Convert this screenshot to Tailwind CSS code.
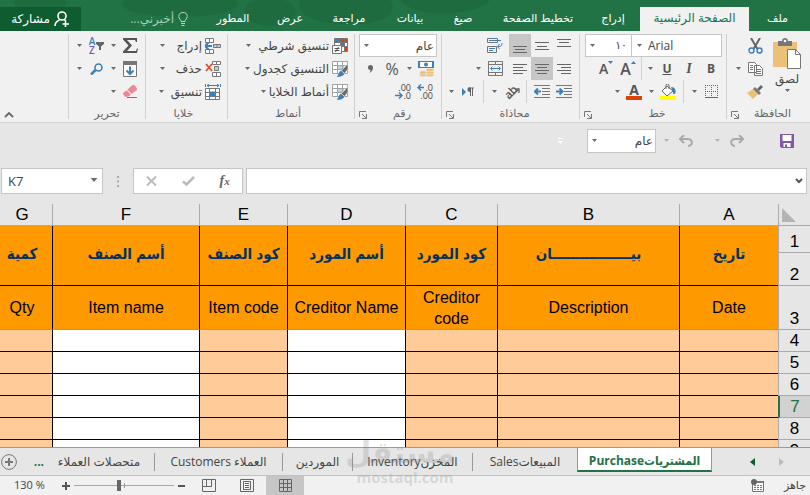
<!DOCTYPE html>
<html lang="ar" dir="rtl">
<head>
  <meta charset="UTF-8" />
  <meta name="viewport" content="width=device-width, initial-scale=1.0" />
  <title>المشتريات Purchase</title>
  <script src="https://cdn.jsdelivr.net/npm/@tailwindcss/browser@4"></script>
</head>
<body class="h-screen flex flex-col overflow-hidden bg-[#e6e6e6] font-['Open_Sans','DejaVu_Sans',sans-serif] text-[11px] text-[#444]">

  <!-- shared icons -->
  <svg class="hidden">
    <symbol id="caret" viewBox="0 0 5 3"><path d="M0 0h5L2.5 3z" fill="#6a6a6a"/></symbol>
    <symbol id="launcher" viewBox="0 0 8 8"><path d="M.5 6V.5H7M3 3l4 4M7.500 3v4.500H3" fill="none" stroke="#777"/></symbol>
    <symbol id="brushgrid" viewBox="0 0 16 16">
      <path d="M1 1h14v11H1z" fill="#fff"/><path d="M5 4h7v5H5z" fill="#b8d0e6"/>
      <path d="M.5.5h15v12H.5zM.5 4.500h15M.5 8.500h15M5.500 .5v12M10.500 .5v12" fill="none" stroke="#a2a2a2"/>
      <path d="M16 2.500l-6.500 7 3 3L16 8z" fill="#6a6a6a" stroke="#f1f1f1" stroke-width=".6"/><path d="M9 9.500l3.300 3.500c-1 2-4 3-7.800 3 2-1 2-5.500 4.500-6.500z" fill="#3f7fb8"/>
    </symbol>
  </svg>

  <!-- tabs -->
  <header class="relative flex items-end h-[31px] shrink-0 bg-[#217346] text-white">
    <svg class="absolute inset-y-0 left-0 w-[520px] h-full" viewBox="0 0 520 31" preserveAspectRatio="none" fill="#1e6b40">
      <ellipse cx="180" cy="4" rx="58" ry="13"/><ellipse cx="40" cy="3" rx="26" ry="9"/><path d="M300 0h90c10 12-6 22-28 24-30 2-70-4-62-24z"/><path d="M400 0h90c-10 14-70 22-90 0z"/><ellipse cx="270" cy="12" rx="26" ry="14"/>
    </svg>
    <nav class="relative flex h-6 text-center leading-[22px]">
      <a href="#" class="w-[61px] pr-1">ملف</a>
      <a href="#" class="w-[109px] bg-[#f1f1f1] text-xs leading-[22px] text-[#217346]">الصفحة الرئيسية</a>
      <a href="#" class="w-[54px]">إدراج</a>
      <a href="#" class="w-[96px]">تخطيط الصفحة</a>
      <a href="#" class="w-[54px]">صيغ</a>
      <a href="#" class="w-[52px]">بيانات</a>
      <a href="#" class="w-[70px]">مراجعة</a>
      <a href="#" class="w-[48px]">عرض</a>
      <a href="#" class="w-[66px]">المطور</a>
    </nav>
    <button class="relative flex items-center gap-1 h-6 pr-3 text-xs text-[#a5cfb5]">
      <svg class="w-[10px] h-[14px]" viewBox="0 0 10 14" fill="none" stroke="#b5d8c2"><path d="M3 9.500C3 7.500.8 7 .8 4.500a4.200 4 0 0 1 8.400 0C9.200 7 7 7.500 7 9.500zM3 11.500h4M3.500 13.500h3"/></svg>
      أخبرني...
    </button>
    <button class="relative mr-auto flex items-center justify-center gap-1 w-[81px] h-6 bg-[#0e5c2f] text-xs">
      <svg class="w-4 h-4" viewBox="0 0 16 16" fill="none" stroke="#fff" stroke-width="1.600"><circle cx="8" cy="5" r="4"/><path d="M1 15c0-3 2-5 4.500-6M10.500 9l1.500 1M11.500 10v6M8.500 13h6.500"/></svg>
      مشاركة
    </button>
  </header>

  <!-- ribbon -->
  <div class="flex h-[92px] shrink-0 pt-[3px] bg-[#f1f1f1] border-b border-[#d2d2d2]">

    <section class="flex flex-col w-[84px] h-[85px] border-l border-[#d0d0d0]">
      <div class="flex h-[69px] pr-1">
        <button class="flex flex-col items-center w-[38px] pt-1" aria-label="لصق">
          <svg class="w-[30px] h-[31px] shrink-0" viewBox="0 0 30 31"><path d="M1 4h24v25H1z" fill="#ebc078"/><path d="M6 3h4c0-4 6-4 6 0h4v5H6z" fill="#777"/><circle cx="13" cy="3" r="1.300" fill="#fff"/><path d="M15.500 11.500h8l5 5v14h-13z" fill="#fff" stroke="#777"/><path d="M23.500 11.500v5h5" fill="none" stroke="#777"/></svg>
          <span class="text-xs leading-5">لصق</span>
          <svg class="w-[5px] h-[3px]"><use href="#caret"/></svg>
        </button>
        <div class="flex flex-col pr-0.5">
          <button class="flex items-center justify-center w-[22px] h-[23px]" aria-label="قص"><svg class="w-[15px] h-4" viewBox="0 0 15 16" fill="none"><path d="M3 0l6.500 11M12 0L5.500 11" stroke="#666" stroke-width="2"/><circle cx="3.500" cy="12.500" r="2.500" stroke="#3f7fb8" stroke-width="1.400"/><circle cx="11.500" cy="12.500" r="2.500" stroke="#3f7fb8" stroke-width="1.400"/></svg></button>
          <div class="flex">
            <button class="flex items-center justify-center w-[22px] h-[23px]" aria-label="نسخ"><svg class="w-[15px] h-[14px]" viewBox="0 0 15 14"><path d="M.5.5h6l2 2v8h-8zM6.500 3.500h5l3 3v7h-8z" fill="#fff" stroke="#777"/><path d="M2 3.500h3M2 5.500h3M2 7.500h3M8 7.500h5M8 9.500h5M8 11.500h5" stroke="#3f7fb8"/></svg></button>
            <button class="flex items-center justify-center w-3 h-[23px]" aria-label="خيارات النسخ"><svg class="w-[5px] h-[3px]"><use href="#caret"/></svg></button>
          </div>
          <button class="flex items-center justify-center w-[22px] h-[23px]" aria-label="نسخ التنسيق"><svg class="w-4 h-[14px]" viewBox="0 0 16 14"><path d="M0 8l6-4 5 5-5 5z" fill="#ebc078"/><path d="M6 4l2-2 6 6-2 2z" fill="#777"/><path d="M10 4l4-4 2 2-4 4z" fill="#666"/></svg></button>
        </div>
      </div>
      <div class="flex items-end h-4 px-1 text-[#666]"><span class="flex-1 text-center leading-3">الحافظة</span><button aria-label="خيارات الحافظة"><svg class="w-2 h-2"><use href="#launcher"/></svg></button></div>
    </section>

    <section class="flex flex-col w-[147px] h-[85px] border-l border-[#d0d0d0]">
      <div class="flex pr-1">
        <label class="relative"><select dir="ltr" aria-label="الخط" class="appearance-none block w-[91px] h-[23px] pl-4 bg-white border border-[#c6c6c6] text-xs"><option>Arial</option></select><svg class="absolute left-[6px] top-[10px] w-[5px] h-[3px]"><use href="#caret"/></svg></label>
        <label class="relative -mr-px"><select aria-label="حجم الخط" class="appearance-none block w-[47px] h-[23px] pr-1 bg-white border border-[#c6c6c6]"><option>١٠</option></select><svg class="absolute left-[5px] top-[10px] w-[5px] h-[3px]"><use href="#caret"/></svg></label>
      </div>
      <div class="flex items-center h-[23px] pr-1 text-[#555]">
        <button class="w-[22px] text-xs font-bold">B</button>
        <button class="w-[22px] text-sm font-bold font-['Liberation_Serif',serif] italic">I</button>
        <button class="w-[22px] text-xs font-bold underline">U</button>
        <button class="flex justify-center w-3" aria-label="نوع التسطير"><svg class="w-[5px] h-[3px]"><use href="#caret"/></svg></button>
        <span class="w-px h-[23px] mx-0.5 bg-[#d0d0d0]"></span>
        <button class="flex justify-center items-center w-[22px] h-[23px] text-base font-semibold" aria-label="تكبير الخط"><svg class="w-[5px] h-[3px] mb-3" viewBox="0 0 5 3"><path d="M0 3h5L2.500 0z" fill="#3f7fb8"/></svg>A</button>
        <button class="flex justify-center items-center w-[22px] h-[23px] text-sm font-semibold" aria-label="تصغير الخط"><svg class="w-[5px] h-[3px] mb-3" viewBox="0 0 5 3"><path d="M0 0h5L2.500 3z" fill="#3f7fb8"/></svg>A</button>
      </div>
      <div class="flex items-center h-[23px] pr-1">
        <button class="flex justify-center w-[22px]" aria-label="حدود"><svg class="w-[13px] h-[13px]" viewBox="0 0 13 13" fill="none" stroke="#666"><path d="M.5 0v12M6.500 0v12M12.500 0v12M0 .5h13M0 6.500h13" stroke-dasharray="1 1"/><path d="M0 12.500h13"/></svg></button>
        <button class="flex justify-center w-3" aria-label="خيارات الحدود"><svg class="w-[5px] h-[3px]"><use href="#caret"/></svg></button>
        <span class="w-px h-[23px] mx-1 bg-[#d0d0d0]"></span>
        <button class="flex justify-center w-[22px]" aria-label="لون التعبئة"><svg class="w-4 h-4" viewBox="0 0 16 16"><path d="M0 12h16v4H0z" fill="#ffff00"/><path d="M7 2l6 5-6 5-5-5z" fill="#fff" stroke="#666"/><path d="M6 5V1.500a1.500 1.500 0 0 1 3 0V5" fill="none" stroke="#666"/><path d="M11 3c4 0 5 3 4.500 6-1 2-3 1-2.500-1z" fill="#3f7fb8"/></svg></button>
        <button class="flex justify-center w-3" aria-label="ألوان التعبئة"><svg class="w-[5px] h-[3px]"><use href="#caret"/></svg></button>
        <button class="flex flex-col items-center w-[22px] text-sm leading-3 font-bold text-[#555]" aria-label="لون الخط">A<span class="w-4 h-1 bg-[#e04006]"></span></button>
        <button class="flex justify-center w-3" aria-label="ألوان الخط"><svg class="w-[5px] h-[3px]"><use href="#caret"/></svg></button>
      </div>
      <div class="flex items-end h-4 px-1 text-[#666]"><span class="flex-1 text-center leading-3">خط</span><button aria-label="خيارات الخط"><svg class="w-2 h-2"><use href="#launcher"/></svg></button></div>
    </section>

    <section class="flex flex-col w-[138px] h-[85px] border-l border-[#d0d0d0]">
      <div class="flex items-center h-[23px] pr-1">
        <button class="flex justify-center items-center w-[22px] h-[23px]" aria-label="محاذاة للأعلى"><svg class="w-[14px] h-[14px]" viewBox="0 0 14 14" stroke="#666"><path d="M0 .5h14M2 3.500h10M0 7.500h14"/></svg></button>
        <button class="flex justify-center items-center w-[22px] h-[23px]" aria-label="محاذاة للوسط"><svg class="w-[14px] h-[14px]" viewBox="0 0 14 14" stroke="#666"><path d="M0 3.500h14M2 7.500h10M0 10.500h14"/></svg></button>
        <button class="flex justify-center items-center w-[22px] h-[23px] bg-[#c6c6c6]" aria-label="محاذاة للأسفل"><svg class="w-[14px] h-[14px]" viewBox="0 0 14 14" stroke="#666"><path d="M0 7.500h14M2 10.500h10M0 13.500h14"/></svg></button>
        <button class="flex justify-center items-center w-[22px] h-[23px] mr-[3px]" aria-label="التفاف النص"><svg class="w-4 h-4" viewBox="0 0 16 16" fill="none"><path d="M.5.5h10v4H.5zM.5 8.500h9v6H.5z" stroke="#777"/><path d="M2 2.500h12M2 10.500h6M2 12.500h4M11 8.500h1.500c2 0 2.500-2 2.500-3.500M12.500 6l-2 2.500 2 2.500" stroke="#3f7fb8"/></svg></button>
      </div>
      <div class="flex items-center h-[23px] pr-1">
        <button class="flex justify-center items-center w-[22px] h-[23px]" aria-label="محاذاة لليمين"><svg class="w-[14px] h-[14px]" viewBox="0 0 14 14" stroke="#666"><path d="M0 2.500h14M4 5.500h10M0 8.500h14M4 11.500h10"/></svg></button>
        <button class="flex justify-center items-center w-[22px] h-[23px] bg-[#c6c6c6]" aria-label="توسيط"><svg class="w-[14px] h-[14px]" viewBox="0 0 14 14" stroke="#666"><path d="M0 2.500h14M2 5.500h10M0 8.500h14M2 11.500h10"/></svg></button>
        <button class="flex justify-center items-center w-[22px] h-[23px]" aria-label="محاذاة لليسار"><svg class="w-[14px] h-[14px]" viewBox="0 0 14 14" stroke="#666"><path d="M0 2.500h14M0 5.500h10M0 8.500h14M0 11.500h10"/></svg></button>
        <button class="flex justify-center items-center w-[22px] h-[23px] mr-[3px]" aria-label="دمج وتوسيط"><svg class="w-[15px] h-[15px]" viewBox="0 0 15 15" fill="none"><path d="M.5.5h14v14H.5zM.5 3.500h14M.5 11.500h14M7.500 .5v3M7.500 11.500v3" stroke="#777"/><path d="M2.500 7.500h10M4.500 5.500l-2 2 2 2M10.500 5.500l2 2-2 2" stroke="#3f7fb8"/></svg></button>
        <button class="flex justify-center w-3" aria-label="خيارات الدمج"><svg class="w-[5px] h-[3px]"><use href="#caret"/></svg></button>
      </div>
      <div class="flex items-center h-[23px] pr-1">
        <button class="flex justify-center w-[22px]" aria-label="إنقاص المسافة البادئة"><svg class="w-4 h-[13px]" viewBox="0 0 16 13"><path d="M0 .5h16M8 3.500h8M8 6.500h8M8 9.500h8M0 12.500h16" stroke="#777"/><path d="M0 6.500h6M3.500 3.500l3 3-3 3" fill="none" stroke="#3f7fb8" stroke-width="2"/></svg></button>
        <button class="flex justify-center w-[22px]" aria-label="زيادة المسافة البادئة"><svg class="w-4 h-[13px]" viewBox="0 0 16 13"><path d="M0 .5h16M8 3.500h8M8 6.500h8M8 9.500h8M0 12.500h16" stroke="#777"/><path d="M1 6.500h6M4 3.500l-3 3 3 3" fill="none" stroke="#3f7fb8" stroke-width="2"/></svg></button>
        <span class="w-px h-[23px] mx-1 bg-[#d0d0d0]"></span>
        <button class="relative flex justify-center w-[22px]" aria-label="الاتجاه"><span class="-rotate-45 text-[11px] leading-3 font-semibold text-[#555]">ab</span><svg class="absolute left-1 top-0 w-4 h-[14px]" viewBox="0 0 16 14" fill="none" stroke="#666" stroke-width="1.300"><path d="M5 13L15 3M11 3h4v4"/></svg></button>
        <button class="flex justify-center w-3" aria-label="خيارات الاتجاه"><svg class="w-[5px] h-[3px]"><use href="#caret"/></svg></button>
        <span class="w-px h-[23px] mx-1 bg-[#d0d0d0]"></span>
        <button class="flex justify-center w-[22px]" aria-label="من اليمين إلى اليسار"><svg class="w-3 h-[10px]" viewBox="0 0 12 10"><path d="M0 1l4 4-4 4z" fill="#3f7fb8"/><path d="M8.500 1v8M10.500 1v8M12 1H8" stroke="#666" fill="none"/><path d="M8 0a2.500 2.500 0 0 0 0 5z" fill="#666"/></svg></button>
        <button class="flex justify-center w-3" aria-label="خيارات اتجاه النص"><svg class="w-[5px] h-[3px]"><use href="#caret"/></svg></button>
      </div>
      <div class="flex items-end h-4 px-1 text-[#666]"><span class="flex-1 text-center leading-3">محاذاة</span><button aria-label="خيارات المحاذاة"><svg class="w-2 h-2"><use href="#launcher"/></svg></button></div>
    </section>

    <section class="flex flex-col w-[87px] h-[85px] border-l border-[#d0d0d0]">
      <label class="relative mx-1"><select aria-label="تنسيق الأرقام" class="appearance-none block w-full h-[23px] pr-0.5 bg-white border border-[#c6c6c6] text-xs"><option>عام</option></select><svg class="absolute left-[5px] top-[10px] w-[5px] h-[3px]"><use href="#caret"/></svg></label>
      <div class="flex items-center h-[23px] pr-1">
        <button class="flex justify-center w-[22px]" aria-label="تنسيق محاسبي"><svg class="w-4 h-4" viewBox="0 0 16 16"><path d="M0 0h16v7H0z" fill="#3f7fb8"/><path d="M2 1h12v5H2z" fill="#fff"/><circle cx="8" cy="3.500" r="2" fill="#3f7fb8"/><g fill="#ebc078" stroke="#f1f1f1" stroke-width=".5"><ellipse cx="12" cy="14" rx="4" ry="1.800"/><ellipse cx="12" cy="11.500" rx="4" ry="1.800"/><ellipse cx="12" cy="9" rx="4" ry="1.800"/><ellipse cx="5" cy="14" rx="3.500" ry="1.800"/><ellipse cx="5" cy="11.500" rx="3.500" ry="1.800"/></g></svg></button>
        <button class="flex justify-center w-3" aria-label="خيارات العملة"><svg class="w-[5px] h-[3px]"><use href="#caret"/></svg></button>
        <button class="w-[22px] text-base leading-5 text-[#555]">%</button>
        <button class="flex justify-center w-[22px]" aria-label="نمط الفاصلة"><svg class="w-[5px] h-[8px]" viewBox="0 0 5 8"><path d="M0 2.500a2.500 2.500 0 0 1 5 0C5 5 4 7 1 8c1-1.200 1.500-2 1.500-3A2.500 2.500 0 0 1 0 2.500z" fill="#666"/></svg></button>
      </div>
      <div dir="ltr" class="flex justify-end items-center h-[23px] pr-1 text-[9px] leading-[8px]">
        <button class="w-[22px] text-right pr-1">.00<span class="flex items-center justify-end"><svg class="w-2 h-[7px]" viewBox="0 0 8 7" fill="none" stroke="#3f7fb8" stroke-width="1.500"><path d="M0 3.500h7M4 .5l3 3-3 3"/></svg>.0</span></button>
        <button class="w-[22px] text-right pr-1"><span class="flex items-center justify-end"><svg class="w-2 h-[7px]" viewBox="0 0 8 7" fill="none" stroke="#3f7fb8" stroke-width="1.500"><path d="M1 3.500h6M4 .5l-3 3 3 3"/></svg>.0</span>.00</button>
      </div>
      <div class="flex items-end h-4 px-1 text-[#666]"><span class="flex-1 text-center leading-3">رقم</span><button aria-label="خيارات الرقم"><svg class="w-2 h-2"><use href="#launcher"/></svg></button></div>
    </section>

    <section class="flex flex-col w-[127px] h-[85px] pr-1.5 border-l border-[#d0d0d0]">
      <button class="flex items-center gap-[3px] h-[23px] text-xs"><svg class="w-4 h-4" viewBox="0 0 16 16"><path d="M2 1h13v12H2z" fill="#fff"/><path d="M2 1h6v3H2zM8 5h5v3H8z" fill="#3f7fb8"/><path d="M9 1h6v3H9zM12 9h3v4h-3z" fill="#e04006"/><path d="M2.500.5h13v13H8M2.500.5V7M8.500.5V7M12.500 .5v13M2.500 4.500h13M8 8.500h7.500" fill="none" stroke="#777"/><path d="M.5 7.500h9v8h-9z" fill="#fff" stroke="#777"/><path d="M2.500 10.500h5M2.500 12.500h5M6.500 9l-3 5" stroke="#555"/></svg>تنسيق شرطي<svg class="w-[5px] h-[3px] mr-1"><use href="#caret"/></svg></button>
      <button class="flex items-center gap-[3px] h-[23px] text-xs"><svg class="w-4 h-4"><use href="#brushgrid"/></svg>التنسيق كجدول<svg class="w-[5px] h-[3px]"><use href="#caret"/></svg></button>
      <button class="flex items-center gap-[3px] h-[23px] text-xs"><svg class="w-4 h-4"><use href="#brushgrid"/></svg>أنماط الخلايا<svg class="w-[5px] h-[3px]"><use href="#caret"/></svg></button>
      <div class="flex items-end justify-center h-4 text-[#666] leading-3">أنماط</div>
    </section>

    <section class="flex flex-col w-[82px] h-[85px] pr-1.5 border-l border-[#d0d0d0]">
      <button class="flex items-center gap-[3px] h-[23px] text-xs"><svg class="w-4 h-4" viewBox="0 0 16 16" fill="#fff" stroke="#777"><path d="M.5.5h4v4h-4zM4.500.5h4v4h-4zM.5 11.500h4v4h-4zM4.500 11.500h4v4h-4z"/><path d="M8.500 6.500h7v3h-7zM12 6.500v3" fill="#b8d0e6"/><path d="M0 8h7M3.500 4.500L0 8l3.500 3.500" fill="none" stroke="#3f7fb8" stroke-width="2"/></svg>إدراج<svg class="w-[5px] h-[3px] mr-2"><use href="#caret"/></svg></button>
      <button class="flex items-center gap-[3px] h-[23px] text-xs"><svg class="w-4 h-4" viewBox="0 0 16 16" fill="#fff" stroke="#777"><path d="M7.500.5h4v3h-4zM11.500.5h4v3h-4zM7.500 11.500h4v4h-4zM11.500 11.500h4v4h-4z"/><path d="M9.500 5.500h4v4h-4z" fill="#b8d0e6"/><path d="M1 3l6 7M7 3l-6 7" stroke="#d8532a" stroke-width="1.800"/></svg>حذف<svg class="w-[5px] h-[3px] mr-2"><use href="#caret"/></svg></button>
      <button class="flex items-center gap-[3px] h-[23px] text-xs"><svg class="w-4 h-4" viewBox="0 0 16 16" fill="none"><path d="M2 1.500h12M4 0L2 1.500 4 3M12 0l2 1.500L12 3M.5 0v3M15.500 0v3" stroke="#3f7fb8"/><path d="M.5 4.500h14v11H.5z" fill="#fff" stroke="#777"/><path d="M.5 8.500h14M.5 12.500h14M4.500 4.500v11M10.500 4.500v11" stroke="#777"/><path d="M5 7.500h5v5H5z" fill="#3f7fb8"/></svg>تنسيق<svg class="w-[5px] h-[3px] mr-1"><use href="#caret"/></svg></button>
      <div class="flex items-end justify-center h-4 text-[#666] leading-3">خلايا</div>
    </section>

    <section class="flex flex-col w-[77px] h-[85px] border-l border-[#d0d0d0]">
      <div class="flex items-center h-[23px] pr-1">
        <button class="flex justify-center w-[22px]" aria-label="جمع تلقائي"><svg class="w-[15px] h-[15px]" viewBox="0 0 15 15"><path d="M0 0h14v4h-1L12 2H4l5 5.500L4 13h9l1-2.500h1L14 15H0v-1.500l5.500-6L0 1.500z" fill="#555"/></svg></button>
        <button class="flex justify-center w-3" aria-label="خيارات الجمع"><svg class="w-[5px] h-[3px]"><use href="#caret"/></svg></button>
        <button class="flex items-center justify-center w-[22px]" aria-label="فرز وتصفية"><svg class="w-2 h-2" viewBox="0 0 8 8"><path d="M0 0h8v2L5 4.500V8H3V4.500L0 2z" fill="#666"/></svg><span class="flex flex-col w-2 text-[10px] leading-[9px] font-semibold"><span class="text-[#3f7fb8]">A</span><span class="text-[#8250a8]">Z</span></span></button>
        <button class="flex justify-center w-3" aria-label="خيارات الفرز"><svg class="w-[5px] h-[3px]"><use href="#caret"/></svg></button>
      </div>
      <div class="flex items-center h-[23px] pr-1">
        <button class="flex justify-center w-[22px]" aria-label="تعبئة"><svg class="w-[14px] h-4" viewBox="0 0 14 16"><path d="M.5.5h13v15H.5z" fill="#fff" stroke="#777"/><path d="M0 0h14v4H0z" fill="#777"/><path d="M7 5.500V13M3.500 9.500L7 13l3.500-3.500" fill="none" stroke="#3f7fb8" stroke-width="2"/></svg></button>
        <button class="flex justify-center w-3" aria-label="خيارات التعبئة"><svg class="w-[5px] h-[3px]"><use href="#caret"/></svg></button>
        <button class="flex justify-center w-[22px]" aria-label="بحث وتحديد"><svg class="w-[13px] h-[12px]" viewBox="0 0 13 12" fill="none" stroke="#3f7fb8"><circle cx="8.500" cy="4.500" r="3.500" stroke-width="1.600"/><path d="M5.500 7L1 11.500" stroke-width="2.500"/></svg></button>
        <button class="flex justify-center w-3" aria-label="خيارات البحث"><svg class="w-[5px] h-[3px]"><use href="#caret"/></svg></button>
      </div>
      <div class="flex items-center h-[23px] pr-1">
        <button class="flex justify-center w-[22px]" aria-label="مسح"><svg class="w-[14px] h-[13px]" viewBox="0 0 14 13"><path d="M4.500 4.500L9.500 0h2l2.500 3.500v1.500L8.500 9z" fill="#e88a96"/><path d="M3.800 5.200l4 4.500-2.500 2H2L0 9V8z" fill="#e88a96"/><path d="M4 12.500h10" stroke="#777"/></svg></button>
        <button class="flex justify-center w-3" aria-label="خيارات المسح"><svg class="w-[5px] h-[3px]"><use href="#caret"/></svg></button>
      </div>
      <div class="flex items-end justify-center h-4 text-[#666] leading-3">تحرير</div>
    </section>

    <button class="mr-auto self-end mb-1 ml-1" aria-label="طي الشريط"><svg class="w-[10px] h-[7px]" viewBox="0 0 10 7" fill="none" stroke="#666" stroke-width="1.800"><path d="M1 6l4-4 4 4"/></svg></button>
  </div>

  <!-- quick access -->
  <div class="flex items-center h-[35px] shrink-0 pr-4">
    <button aria-label="حفظ"><svg class="w-[14px] h-[14px]" viewBox="0 0 14 14"><path d="M0 0h14v14H1.500L0 12.500z" fill="#8058a8"/><path d="M2.500 1h9v6h-9zM3.500 9h7v4h-7z" fill="#fff"/><path d="M5 10.500h2V13H5z" fill="#8058a8"/></svg></button>
    <button class="mr-9" aria-label="إعادة"><svg class="w-[14px] h-[12px]" viewBox="0 0 14 12" fill="none" stroke="#a9a9a9" stroke-width="2"><path d="M13 4H6C-.5 4 0 10.500 5 11M9 0l4 4-4 4"/></svg></button>
    <svg class="w-[5px] h-[3px] mr-2.5 opacity-40"><use href="#caret"/></svg>
    <button class="mr-[22px]" aria-label="تراجع"><svg class="w-[14px] h-[12px]" viewBox="0 0 14 12" fill="none" stroke="#a9a9a9" stroke-width="2"><path d="M1 4h7c6.500 0 6 6.500 1 7M5 0L1 4l4 4"/></svg></button>
    <svg class="w-[5px] h-[3px] mr-2.5 opacity-40"><use href="#caret"/></svg>
    <label class="relative mr-2"><select aria-label="تنسيق سريع" class="appearance-none block w-[69px] h-6 pr-0.5 bg-white border border-[#c6c6c6] text-xs"><option>عام</option></select><svg class="absolute left-[5px] top-[10px] w-[5px] h-[3px]"><use href="#caret"/></svg></label>
    <svg class="w-[5px] h-[6px] mr-6" viewBox="0 0 5 6"><path d="M0 0h5v1H0zM0 3h5L2.500 6z" fill="#fff"/></svg>
  </div>

  <!-- formula bar -->
  <div dir="ltr" class="flex items-center h-[46px] shrink-0 pl-px pr-[3px]">
    <label class="relative"><input aria-label="Name box" value="K7" class="block w-[102px] h-[26px] pl-1.5 bg-white border border-[#c6c6c6] text-[13px]"><svg class="absolute right-[5px] top-[10px] w-2 h-1"><use href="#caret"/></svg></label>
    <svg class="w-[30px] h-[11px]" viewBox="0 0 30 11" fill="#a9a9a9"><path d="M14 0h2v2h-2zM14 4.500h2v2h-2zM14 9h2v2h-2z"/></svg>
    <div class="flex items-center justify-around w-[110px] h-[26px] bg-white border border-[#c6c6c6]">
      <button aria-label="Cancel"><svg class="w-[11px] h-[10px]" viewBox="0 0 11 10" stroke="#bbb" stroke-width="2"><path d="M1 .5l9 9M10 .5l-9 9"/></svg></button>
      <button aria-label="Enter"><svg class="w-[13px] h-[10px]" viewBox="0 0 13 10" fill="none" stroke="#bbb" stroke-width="2.500"><path d="M1 5.500l3.500 3L12 1"/></svg></button>
      <button class="font-['Liberation_Serif',serif] italic font-bold text-sm leading-4 text-[#666]" aria-label="Insert function">f<span class="text-[11px]">x</span></button>
    </div>
    <label class="relative flex-1 ml-[3px]"><input aria-label="Formula" class="block w-full h-[26px] px-2 bg-white border border-[#c6c6c6] text-[13px]"><svg class="absolute right-1 top-[10px] w-2 h-[6px]" viewBox="0 0 8 6" fill="none" stroke="#555" stroke-width="2"><path d="M1 1l3 3 3-3"/></svg></label>
  </div>

  <!-- sheet -->
  <main class="flex-1 min-h-0 overflow-hidden">
    <table class="w-full table-fixed border-separate border-spacing-0 font-['Liberation_Sans','DejaVu_Sans_Condensed','DejaVu_Sans',sans-serif] text-base leading-[21px] text-black text-center">
      <colgroup><col class="w-[32px]"><col class="w-[99px]"><col class="w-[182px]"><col class="w-[92px]"><col class="w-[118px]"><col class="w-[88px]"><col class="w-[147px]"><col></colgroup>
      <thead>
        <tr class="h-[22px] text-[17px] leading-[21px] *:font-normal *:p-0 *:border-l *:border-b *:border-[#ababab] *:last:border-l-0">
          <th><svg class="w-[14px] h-[14px] mr-auto ml-[3px]" viewBox="0 0 14 14"><path d="M0 0l14 14H0z" fill="#b4b4b4"/></svg></th>
          <th>A</th><th>B</th><th>C</th><th>D</th><th>E</th><th>F</th><th class="pr-2!">G</th>
        </tr>
      </thead>
      <tbody class="[&_th]:p-0 [&_th]:align-bottom [&_th]:font-normal [&_th]:text-[17px] [&_th]:leading-[20px] [&_th]:border-l [&_th]:border-b [&_th]:border-[#ababab] [&_td]:p-0 [&_td]:border-l [&_td]:border-b [&_td]:border-black [&_td]:last:border-l-0">
        <tr class="h-[27px] text-[15px] font-bold text-[#003366] [&>td]:bg-[#ff9900] [&>td]:pb-1">
          <th class="text-black">1</th>
          <td rowspan="2">تاريخ</td><td rowspan="2">بيـــــــــــــــــان</td><td rowspan="2">كود المورد</td><td rowspan="2">أسم المورد</td><td rowspan="2">كود الصنف</td><td rowspan="2">أسم الصنف</td><td rowspan="2" class="pr-2!">كمية</td>
        </tr>
        <tr class="h-[33px]"><th>2</th></tr>
        <tr class="h-[44px] [&>td]:bg-[#ff9900] [&>td]:border-b-[#999]!">
          <th>3</th><td>Date</td><td>Description</td><td class="px-2!">Creditor code</td><td>Creditor Name</td><td>Item code</td><td>Item name</td><td class="pr-2!">Qty</td>
        </tr>
        <tr class="h-[22px] *:bg-[#ffcc99] [&>th]:bg-transparent"><th>4</th><td></td><td></td><td></td><td class="bg-white!"></td><td></td><td class="bg-white!"></td><td></td></tr>
        <tr class="h-[22px] *:bg-[#ffcc99] [&>th]:bg-transparent"><th>5</th><td></td><td></td><td></td><td class="bg-white!"></td><td></td><td class="bg-white!"></td><td></td></tr>
        <tr class="h-[22px] *:bg-[#ffcc99] [&>th]:bg-transparent"><th>6</th><td></td><td></td><td></td><td class="bg-white!"></td><td></td><td class="bg-white!"></td><td></td></tr>
        <tr class="h-[22px] *:bg-[#ffcc99]"><th class="bg-[#d2d2d2]! text-[#217346] border-l-2! border-l-[#217346]!">7</th><td></td><td></td><td></td><td class="bg-white!"></td><td></td><td class="bg-white!"></td><td></td></tr>
        <tr class="h-[22px] *:bg-[#ffcc99] [&>th]:bg-transparent"><th>8</th><td></td><td></td><td></td><td class="bg-white!"></td><td></td><td class="bg-white!"></td><td></td></tr>
        <tr class="h-[22px] *:bg-[#ffcc99] [&>th]:bg-transparent"><th>9</th><td></td><td></td><td></td><td class="bg-white!"></td><td></td><td class="bg-white!"></td><td></td></tr>
      </tbody>
    </table>
  </main>

  <!-- sheet tabs -->
  <footer class="relative shrink-0">
    <div class="flex items-center h-[29px] border-t border-b border-t-[#999] border-b-[#c0c0c0] text-xs">
      <div class="flex items-center justify-center gap-6 w-[98px] shrink-0 pl-3">
        <button aria-label="السابق"><svg class="w-[5px] h-2" viewBox="0 0 5 8"><path d="M0 0l5 4-5 4z" fill="#bbb"/></svg></button>
        <button aria-label="التالي"><svg class="w-[5px] h-2" viewBox="0 0 5 8"><path d="M5 0L0 4l5 4z" fill="#0e5c2f"/></svg></button>
      </div>
      <nav class="flex items-center h-full text-center whitespace-nowrap leading-[18px]">
        <a href="#" class="self-start w-[135px] h-6 pt-1 bg-white border-x border-[#999] border-b-2 border-b-[#217346] font-['Open_Sans','DejaVu_Sans_Condensed','DejaVu_Sans',sans-serif] leading-[18px] font-bold text-[#217346]">المشترياتPurchase</a>
        <a href="#" class="w-[105px] border-l border-[#999]">المبيعاتSales</a>
        <a href="#" class="w-[120px] border-l border-[#999]">المخزنInventory</a>
        <a href="#" class="w-[70px] border-l border-[#999]">الموردين</a>
        <a href="#" class="w-[128px] border-l border-[#999]">العملاء Customers</a>
        <a href="#" class="w-[110px]">متحصلات العملاء</a>
      </nav>
      <button class="font-bold text-[#217346]">...</button>
      <button class="mr-auto ml-px" aria-label="ورقة جديدة"><svg class="w-4 h-4" viewBox="0 0 16 16" fill="none" stroke="#777"><circle cx="8" cy="8" r="7.400"/><path d="M4 8h8M8 4v8" stroke-width="2"/></svg></button>
    </div>

    <!-- status bar -->
    <div class="flex items-center h-[19px] bg-[#f1f1f1]">
      <span class="pr-1">جاهز</span>
      <button class="mr-5" aria-label="تسجيل ماكرو"><svg class="w-[13px] h-[13px]" viewBox="0 0 13 13"><path d="M1.500 2.500h11v10h-11z" fill="#fff" stroke="#777"/><path d="M3 6.500h8M3 8.500h8M3 10.500h8" stroke="#777" stroke-dasharray="2 1"/><path d="M6 2h7v2H6z" fill="#777"/><circle cx="3" cy="3" r="3" fill="#666"/></svg></button>
      <div class="flex items-center h-full mr-auto ml-[14px]">
        <button class="flex items-center justify-center w-[38px] h-full bg-[#c6c6c6]" aria-label="عادي"><svg class="w-[13px] h-[13px]" viewBox="0 0 13 13" fill="none" stroke="#666"><path d="M.5.5h12v12H.5zM.5 4.500h12M.5 8.500h12M4.500.5v12M8.500.5v12"/></svg></button>
        <button class="flex items-center justify-center w-[38px]" aria-label="تخطيط الصفحة"><svg class="w-[14px] h-[13px]" viewBox="0 0 14 13" fill="none" stroke="#666"><path d="M.5.5h13v12H.5zM3.500 2.500h7v8h-7zM5 4.500h4M5 6.500h4M5 8.500h4"/></svg></button>
        <button class="flex items-center justify-center w-[38px]" aria-label="معاينة فواصل الصفحات"><svg class="w-[14px] h-[13px]" viewBox="0 0 14 13" fill="none" stroke="#666"><path d="M.5.5h13v12H.5zM4.500.5v7M9.500.5v7M.5 7.500h9"/></svg></button>
        <button class="mr-[5px]" aria-label="تصغير"><svg class="w-[7px] h-2" viewBox="0 0 7 8" stroke="#555" stroke-width="2"><path d="M0 4h7"/></svg></button>
        <label class="relative flex items-center mx-1"><span class="absolute left-1/2 w-px h-[5px] bg-[#999]"></span><input type="range" min="0" max="100" value="55" aria-label="تكبير/تصغير" class="appearance-none w-[100px] h-px bg-[#a5a5a5] [&::-webkit-slider-thumb]:appearance-none [&::-webkit-slider-thumb]:w-1 [&::-webkit-slider-thumb]:h-[11px] [&::-webkit-slider-thumb]:bg-[#666]"></label>
        <button aria-label="تكبير"><svg class="w-2 h-2" viewBox="0 0 8 8" stroke="#555" stroke-width="2"><path d="M0 4h8M4 0v8"/></svg></button>
        <span dir="ltr" class="mr-4 w-8 whitespace-nowrap">130 %</span>
      </div>
    </div>

    <!-- watermark -->
    <div class="absolute left-[355px] -top-3 w-[100px] text-center font-bold text-[#888]/25 pointer-events-none">
      <div class="text-[30px] leading-[34px]">مستقل</div>
      <div dir="ltr" class="text-[15px] leading-4">mostaql.com</div>
    </div>
  </footer>
</body>
</html>
